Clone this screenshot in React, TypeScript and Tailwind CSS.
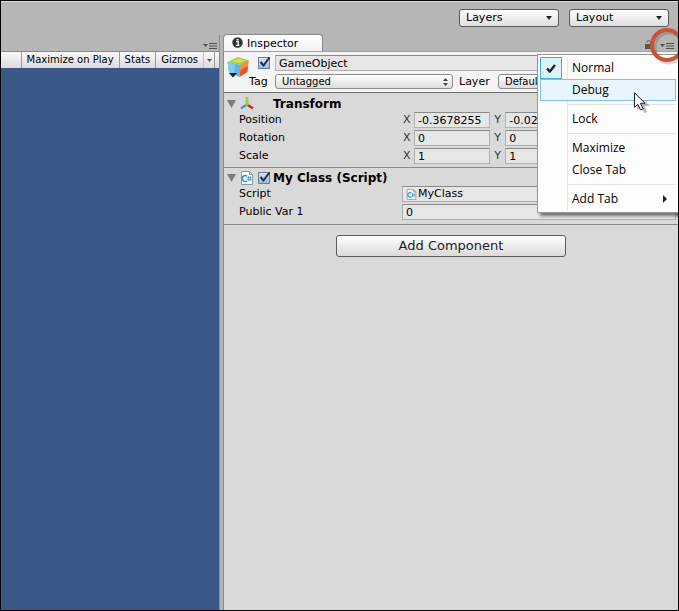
import type { ReactNode } from 'react';
import clsx from 'clsx';

const FIELD =
  'h-4 w-full min-w-0 border border-[#b0b0b0] border-t-[#8a8a8a] bg-[#e6e6e6] px-[3px] text-[11px] leading-[14px] text-black outline-none';

interface PopupProps {
  label: string;
  value: string;
  className?: string;
  arrow: ReactNode;
  small?: boolean;
}

function Popup({ label, value, className, arrow, small }: PopupProps) {
  return (
    <div className={clsx('relative', className)}>
      <select
        aria-label={label}
        className={clsx(
          'block w-full appearance-none rounded-[3px] border bg-gradient-to-b from-white to-[#dedede] pl-[6px] text-black outline-none',
          small ? 'h-[15px] border-[#8c8c8c] text-[10px] leading-[13px]' : 'h-[18px] border-[#5c5c5c] text-[11px] leading-4'
        )}
      >
        <option>{value}</option>
      </select>
      <span className="pointer-events-none absolute inset-y-0 right-1 flex items-center">{arrow}</span>
    </div>
  );
}

function DownArrow() {
  return (
    <svg width="6" height="4" viewBox="0 0 6 4" className="mr-[3px]">
      <path d="M0 0h6L3 4z" fill="#222" />
    </svg>
  );
}

function UpDownArrow() {
  return (
    <svg width="5" height="8" viewBox="0 0 5 8" className="mr-px">
      <path d="M0 3h5L2.500 0zM0 5h5L2.500 8z" fill="#444" />
    </svg>
  );
}

function PaneMenuIcon() {
  return (
    <svg width="14" height="6" viewBox="0 0 14 6">
      <path d="M0 1h5L2.500 4z" fill="#505050" />
      <path d="M6 .5h8M6 3h8M6 5.500h8" stroke="#505050" strokeWidth="1" />
    </svg>
  );
}

function CubeIcon() {
  return (
    <svg width="22" height="21" viewBox="0 0 22 21">
      <path d="M.5 5 11 0l10.500 3.500L14 8z" fill="#a9cc45" />
      <path d="M4.500 4.500 12 1.500l6 2-5 2.500z" fill="#d3dc5e" />
      <path d="M.5 5 14 8 12.500 20 2 15.500z" fill="#5db5e3" />
      <path d="M.5 5 8 6.700 7 17.500 2 15.500z" fill="#86c9ea" />
      <path d="M14 8 21.500 3.500 20.500 15 12.500 20z" fill="#ec5322" />
      <path d="M14 8 21.500 3.500 21 9 13.500 13z" fill="#f5913a" />
      <path d="M2 16h8l-4 4.500z" fill="#222" />
    </svg>
  );
}

function AxesIcon() {
  return (
    <svg width="14" height="13" viewBox="0 0 14 13">
      <path d="M7 7.500 1 11.300" stroke="#4b9cd3" strokeWidth="2.600" />
      <path d="M7 7.500 13 11.300" stroke="#c0302c" strokeWidth="2.600" />
      <path d="M7 8.500V0" stroke="#a0cf3a" strokeWidth="3" />
    </svg>
  );
}

function ScriptIcon({ size }: { size: number }) {
  return (
    <svg width={size} height={size} viewBox="0 0 14 14" className="shrink-0">
      <path d="M1.500.5h8l3 3v10h-11z" fill="#f7fafb" stroke="#8e979c" />
      <path d="M9.500.5v3h3" fill="none" stroke="#8e979c" />
      <path d="M7 5.200a2.900 2.900 0 1 0 0 4.600" fill="none" stroke="#2b93c4" strokeWidth="1.500" />
      <path d="M8.300 5v5M10.300 5v5M7.300 6.600h4.200M7.300 8.600h4.200" stroke="#2b93c4" strokeWidth=".8" />
    </svg>
  );
}

function Foldout() {
  return (
    <svg width="9" height="8" viewBox="0 0 9 8" className="shrink-0">
      <path d="M0 0h9L4.500 8z" fill="#7d7d7d" />
    </svg>
  );
}

function Check({ label }: { label: string }) {
  return (
    <span className="relative h-3 w-3 shrink-0">
      <input
        type="checkbox"
        aria-label={label}
        defaultChecked
        className="peer block h-3 w-3 appearance-none border border-[#6d7f99] bg-gradient-to-b from-[#d5e1f2] to-[#9db9e0]"
      />
      <svg
        width="13"
        height="13"
        viewBox="0 0 13 13"
        className="pointer-events-none absolute -top-px left-0 hidden peer-checked:block"
      >
        <path d="M2.500 6 5.500 9.500 11.500 1.500" fill="none" stroke="#222c3c" strokeWidth="2" />
      </svg>
    </span>
  );
}

function Row({ label, children }: { label: string; children: ReactNode }) {
  return (
    <div className="grid h-[18px] grid-cols-[163px_1fr] items-center pr-[2px] pl-[15px]">
      <span>{label}</span>
      {children}
    </div>
  );
}

function VectorRow({ label, x, y }: { label: string; x: string; y: string }) {
  return (
    <Row label={label}>
      <div className="grid grid-cols-3">
        <label className="flex items-center pr-[3px] pl-px">
          <span className="w-[11px] shrink-0 text-[#333]">X</span>
          <input className={FIELD} defaultValue={x} />
        </label>
        <label className="flex items-center pr-[3px] pl-px">
          <span className="w-[11px] shrink-0 text-[#333]">Y</span>
          <input className={FIELD} defaultValue={y} />
        </label>
        <div className="pl-3">
          <input aria-label={`${label} Z`} className={FIELD} />
        </div>
      </div>
    </Row>
  );
}

function GamePane() {
  return (
    <section className="flex w-[219px] shrink-0 flex-col border-r border-[#8a8a9a]">
      <div className="flex h-4 items-center justify-end pt-[5px] pr-[2px]">
        <button aria-label="Game tab menu">
          <PaneMenuIcon />
        </button>
      </div>
      <div className="flex h-[17px] justify-end border-t border-[#8a8a8a] bg-gradient-to-b from-[#fafafa] to-[#dadada] pr-1 text-[10px] leading-4">
        <button className="border-l border-[#999] px-[5px] whitespace-nowrap">Maximize on Play</button>
        <button className="border-l border-[#999] px-[5px]">Stats</button>
        <button className="border-l border-[#999] px-[5px]">Gizmos</button>
        <button aria-label="Gizmo options" className="flex w-3 items-center justify-center border-x border-[#999] border-l-[#c4c4c4]">
          <svg width="5" height="3" viewBox="0 0 5 3">
            <path d="M0 0h5L2.500 3z" fill="#555" />
          </svg>
        </button>
      </div>
      <div className="flex-1 bg-[#395888]" />
    </section>
  );
}

function MenuItem({ children, checked, active }: { children: ReactNode; checked?: boolean; active?: boolean }) {
  return (
    <button
      role="menuitem"
      className={clsx(
        'flex h-[22px] w-full items-center border text-left',
        active ? 'border-[#7fbfe4] bg-[#e5f4fd]/90' : 'border-transparent'
      )}
    >
      <span
        className={clsx(
          '-ml-px flex h-[22px] w-[22px] shrink-0 items-center justify-center border',
          checked ? 'border-[#45b0d6] bg-[#d8f3fa]' : 'border-transparent'
        )}
      >
        {checked && (
          <svg width="10" height="9" viewBox="0 0 10 9">
            <path d="M1 4.500 3.800 7.500 9 1" fill="none" stroke="#222" strokeWidth="2.400" />
          </svg>
        )}
      </span>
      <span className="ml-[10px] flex flex-1 items-center justify-between pr-2">{children}</span>
    </button>
  );
}

function Separator() {
  return (
    <div className="flex h-[7px] items-center pl-7">
      <div className="h-px flex-1 bg-[#e2e2e2]" />
    </div>
  );
}

function TabMenu() {
  return (
    <div
      role="menu"
      className="absolute top-[19px] right-0 w-[141px] border border-[#979797] border-r-0 bg-[#fdfdfd] p-[2px] font-['Open_Sans','Noto_Sans',sans-serif] text-[12px] leading-4 text-black shadow-[3px_3px_3px_rgba(0,0,0,0.5)]"
    >
      <div className="bg-[linear-gradient(#e6e6e6,#e6e6e6)] bg-[length:1px_100%] bg-[position:27px_0] bg-no-repeat">
        <MenuItem checked>Normal</MenuItem>
        <MenuItem active>Debug</MenuItem>
        <Separator />
        <MenuItem>Lock</MenuItem>
        <Separator />
        <MenuItem>Maximize</MenuItem>
        <MenuItem>Close Tab</MenuItem>
        <Separator />
        <MenuItem>
          Add Tab
          <svg width="4" height="8" viewBox="0 0 4 8">
            <path d="M0 0l4 4-4 4z" fill="#222" />
          </svg>
        </MenuItem>
      </div>
    </div>
  );
}

function Inspector() {
  return (
    <section className="relative ml-[3px] flex min-w-0 flex-1 flex-col">
      <div className="flex h-4 items-end justify-between">
        <h1 className="flex h-[17px] w-[100px] items-center gap-1 rounded-t-[4px] border border-b-0 border-[#8a8a8a] bg-gradient-to-b from-white to-[#f2f2f2] pt-px pl-2">
          <svg width="11" height="11" viewBox="0 0 11 11" className="-mt-[2px]">
            <circle cx="5.500" cy="5.500" r="5.200" fill="#333" />
            <path d="M4 4.500h2.200V8M4 8.300h3.500M4.600 2.600h1.800" fill="none" stroke="#fff" strokeWidth="1.300" />
          </svg>
          Inspector
        </h1>
        <div className="flex items-end gap-[7px] pr-1 pb-[2px]">
          <button aria-label="Lock inspector">
            <svg width="8" height="9" viewBox="0 0 8 9">
              <path d="M2 2.500V1.500Q3.500-.5 5.500 1.500V4" fill="none" stroke="#555" />
              <path d="M0 4h8v5H0z" fill="#555" />
            </svg>
          </button>
          <button aria-label="Inspector tab menu">
            <PaneMenuIcon />
          </button>
        </div>
      </div>

      <div className="flex flex-1 flex-col border-l border-[#8a8a8a] bg-[#d9d9d9]">
        <header className="flex h-[42px] items-start border-t border-b border-t-[#a2a2a2] border-b-[#6f6f6f] bg-[#f4f4f4] pt-[3px] pl-[3px]">
          <span className="pt-[2px]">
            <CubeIcon />
          </span>
          <div className="flex min-w-0 flex-1 flex-col gap-[3px]">
            <div className="flex items-center pl-[9px]">
              <Check label="Active" />
              <input aria-label="Name" defaultValue="GameObject" className={clsx(FIELD, 'ml-[5px] flex-1')} />
            </div>
            <div className="flex items-center">
              <span className="w-[26px] shrink-0">Tag</span>
              <Popup label="Tag" value="Untagged" small className="w-[178px]" arrow={<UpDownArrow />} />
              <span className="ml-[6px] w-[39px] shrink-0">Layer</span>
              <Popup label="Layer" value="Default" small className="mr-1 flex-1" arrow={<UpDownArrow />} />
            </div>
          </div>
        </header>

        <section className="border-b border-[#8a8a8a] pb-[2px]">
          <h2 className="flex h-[18px] items-center pt-[3px] pl-[3px] text-[12px] font-bold">
            <Foldout />
            <span className="mr-[19px] ml-1">
              <AxesIcon />
            </span>
            Transform
          </h2>
          <VectorRow label="Position" x="-0.3678255" y="-0.0217" />
          <VectorRow label="Rotation" x="0" y="0" />
          <VectorRow label="Scale" x="1" y="1" />
        </section>

        <section className="border-b border-[#8a8a8a] pb-[3px]">
          <h2 className="flex h-[17px] items-center pt-[2px] pl-[3px] text-[12px] font-bold">
            <Foldout />
            <span className="mr-1 ml-1">
              <ScriptIcon size={14} />
            </span>
            <Check label="Enabled" />
            <span className="ml-[3px]">My Class (Script)</span>
          </h2>
          <Row label="Script">
            <button className={clsx(FIELD, 'flex items-center gap-px text-left')}>
              <ScriptIcon size={11} />
              MyClass
            </button>
          </Row>
          <Row label="Public Var 1">
            <input aria-label="Public Var 1" className={FIELD} defaultValue="0" />
          </Row>
        </section>

        <button className="mx-auto mt-[10px] h-[22px] w-[230px] rounded-[3px] border border-[#5c5c5c] bg-gradient-to-b from-white to-[#dadada] text-[13px] leading-5 text-[#222]">
          Add Component
        </button>
      </div>

      <TabMenu />

      {/* Highlight ring around the tab menu button */}
      <div className="pointer-events-none absolute top-[-9px] right-0 h-10 w-8 overflow-hidden">
        <svg width="40" height="40" viewBox="0 0 40 40">
          <circle cx="23" cy="21" r="15" fill="none" stroke="#000" strokeOpacity=".15" strokeWidth="5" />
          <circle cx="21" cy="19" r="15" fill="none" stroke="#cf5138" strokeWidth="4" />
        </svg>
      </div>

      {/* Pointer over the Debug item */}
      <svg width="16" height="22" viewBox="0 0 16 22" className="pointer-events-none absolute top-[57px] right-[28px]">
        <path d="M3 3v15l4-3 3 6 3-1-2-6h5z" fill="#000" fillOpacity=".25" />
        <path d="M.5.8v14.500l3.400-3 2.600 5.700 2.600-1.200-2.600-5.500h4.600z" fill="#fff" stroke="#1c2430" />
      </svg>
    </section>
  );
}

export default function App() {
  return (
    <div className="flex min-h-screen flex-col overflow-hidden border border-black bg-[#b6b6b6] font-['DejaVu_Sans',Verdana,sans-serif] text-[11px] leading-[14px] text-black">
      <div className="flex h-[34px] items-start justify-end gap-[10px] border-t border-[#dcdcdc] pt-[7px] pr-[9px]">
        <Popup label="Layers" value="Layers" className="w-[100px]" arrow={<DownArrow />} />
        <Popup label="Layout" value="Layout" className="w-[100px]" arrow={<DownArrow />} />
      </div>
      <main className="flex flex-1">
        <GamePane />
        <Inspector />
      </main>
    </div>
  );
}
